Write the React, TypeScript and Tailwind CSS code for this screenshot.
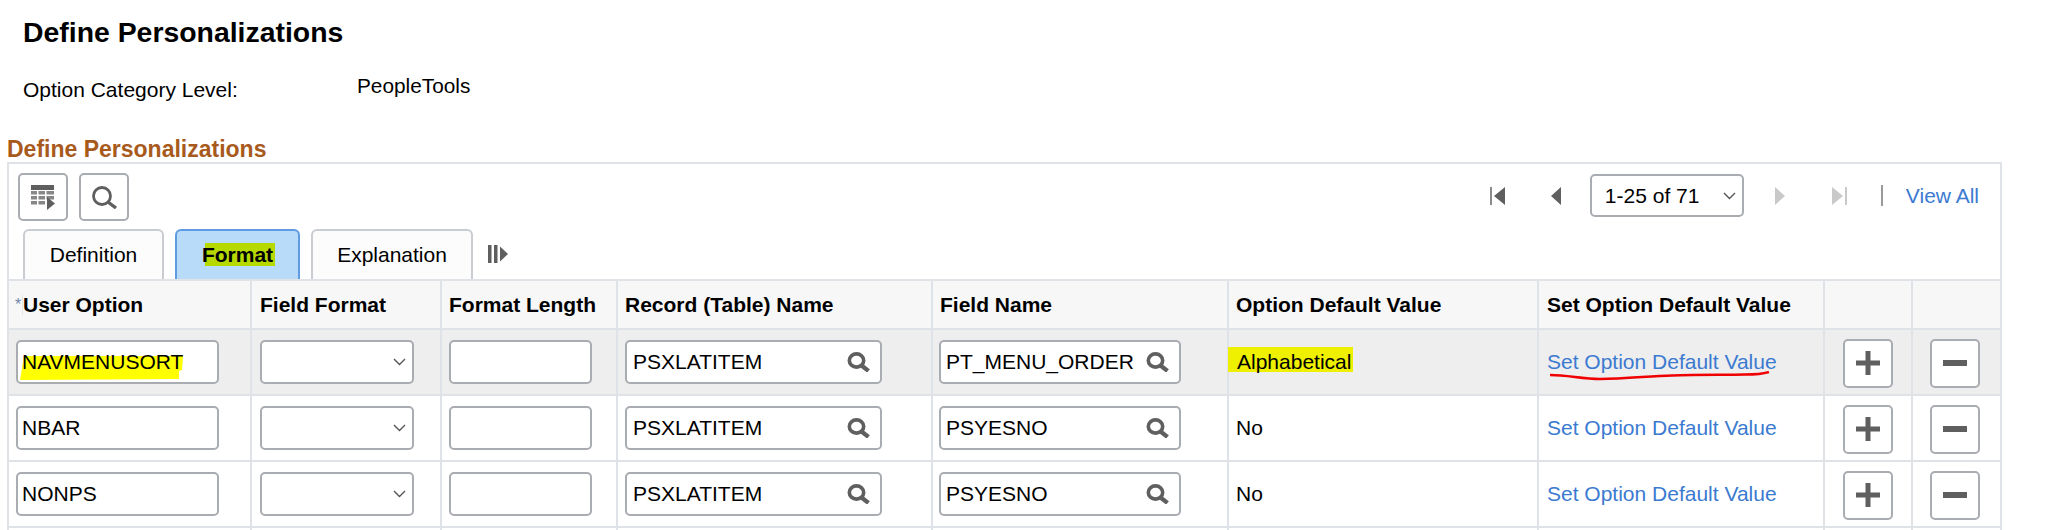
import type { ReactNode } from 'react';

const rows = [
  { option: 'NAVMENUSORT', record: 'PSXLATITEM', field: 'PT_MENU_ORDER', value: 'Alphabetical', marked: true },
  { option: 'NBAR', record: 'PSXLATITEM', field: 'PSYESNO', value: 'No', marked: false },
  { option: 'NONPS', record: 'PSXLATITEM', field: 'PSYESNO', value: 'No', marked: false },
];

const columns = 'grid grid-cols-[243px_190px_176px_315px_296px_310px_286px_88px_87px]';
const cellBorder = 'border-r-2 border-[#dfe3e8] last:border-r-0';

const Chevron = () => (
  <svg width="13" height="8" viewBox="0 0 13 8" fill="none" stroke="#555" strokeWidth="1.4">
    <path d="M1 1l5.5 5.5L12 1" />
  </svg>
);

const LookupIcon = () => (
  <svg width="23" height="20" viewBox="0 0 23 20" fill="none" stroke="#5f5f5f">
    <ellipse cx="9.5" cy="8.5" rx="7.2" ry="6.6" strokeWidth="3.6" />
    <path d="M14.5 13.5l7 5.5" strokeWidth="4.2" />
  </svg>
);

const FieldBox = ({ className, children }: { className: string; children?: ReactNode }) => (
  <div className={`relative flex h-[44px] items-center rounded-[5px] border-2 border-[#a9acb1] bg-white ${className}`}>
    {children}
  </div>
);

const IconButton = ({ children, className = '' }: { children: ReactNode; className?: string }) => (
  <button className={`flex items-center justify-center rounded-[5px] border-2 border-[#a9acb1] bg-white ${className}`}>
    {children}
  </button>
);

const Pager = () => (
  <div className="mt-px flex items-center pr-[21px]">
    <svg width="15" height="18" viewBox="0 0 15 18" fill="#5f5f5f">
      <rect width="2" height="18" fill="#8a8a8a" />
      <path d="M15 0v18L4 9z" />
    </svg>
    <svg className="ml-[46px]" width="10" height="18" viewBox="0 0 10 18" fill="#5f5f5f">
      <path d="M10 0v18L0 9z" />
    </svg>
    <div className="ml-[29px] flex h-[43px] w-[154px] items-center justify-between rounded-[5px] border-2 border-[#a9acb1] bg-white pl-[13px] pr-[6px]">
      <span>1-25 of 71</span>
      <Chevron />
    </div>
    <svg className="ml-[31px]" width="10" height="18" viewBox="0 0 10 18" fill="#c9c9c9">
      <path d="M0 0v18L10 9z" />
    </svg>
    <svg className="ml-[47px]" width="15" height="18" viewBox="0 0 15 18" fill="#c9c9c9">
      <path d="M0 0v18L11 9z" />
      <rect x="13" width="2" height="18" />
    </svg>
    <div className="ml-[34px] h-[21px] w-[2px] bg-[#9a9a9a]" />
    <a className="ml-[23px] text-[#3b7ad1]">View All</a>
  </div>
);

const Toolbar = () => (
  <div className="flex items-start justify-between pl-[9px] pt-[9px]">
    <div className="flex gap-[11px]">
      <IconButton className="h-[48px] w-[50px]">
        <svg width="24" height="25" viewBox="0 0 24 25" fill="#5f5f5f">
          <rect width="23" height="5" />
          <path d="M0 6h6v3.5H0zM7.5 6H14v3.5H7.5zM15.5 6H23v3.5h-7.5zM0 11h6v3.5H0zM7.5 11H14v3.5H7.5zM15.5 11H23v3.5h-7.5zM0 16h6v3.5H0zM7.5 16H14v3.5H7.5z" opacity="0.75" />
          <path d="M16 12l8 6.5L16 25z" />
        </svg>
      </IconButton>
      <IconButton className="h-[48px] w-[50px]">
        <svg width="25" height="23" viewBox="0 0 25 23" fill="none" stroke="#5f5f5f">
          <circle cx="10" cy="10" r="8.5" strokeWidth="2.8" />
          <path d="M16 16l8 6" strokeWidth="3.4" />
        </svg>
      </IconButton>
    </div>
    <Pager />
  </div>
);

const Tabs = () => (
  <div className="mt-[8px] flex h-[50px] items-stretch gap-[11px] pl-[14px]">
    <div className="flex w-[141px] items-center justify-center rounded-t-[6px] border-2 border-b-0 border-[#c9ccd1] bg-[#fcfcfc]">
      Definition
    </div>
    <div className="flex w-[125px] items-center justify-center rounded-t-[6px] border-2 border-b-0 border-[#5f9be0] bg-[#b8dbfa] font-bold">
      <span className="relative">
        <span className="absolute left-[3px] top-[4px] h-[23px] w-[70px] bg-[#b6da00]" />
        <span className="relative">Format</span>
      </span>
    </div>
    <div className="flex w-[162px] items-center justify-center rounded-t-[6px] border-2 border-b-0 border-[#c9ccd1] bg-[#fcfcfc]">
      Explanation
    </div>
    <div className="ml-[4px] flex items-center">
      <svg width="20" height="18" viewBox="0 0 20 18" fill="#5f5f5f">
        <rect width="3.5" height="18" />
        <rect x="6" width="3.5" height="18" />
        <path d="M12 1.5v15L20 9z" />
      </svg>
    </div>
  </div>
);

const Header = () => {
  const titles = ['Field Format', 'Format Length', 'Record (Table) Name', 'Field Name', 'Option Default Value', 'Set Option Default Value', '', ''];
  const padding = ['pl-[8px]', 'pl-[7px]', 'pl-[7px]', 'pl-[7px]', 'pl-[7px]', 'pl-[8px]', '', ''];
  return (
    <div className={`${columns} h-[51px] border-y-2 border-[#dfe3e8] bg-[#f7f7f7] font-bold`}>
      <div className={`${cellBorder} flex items-center pl-[6px]`}>
        <span className="flex h-[20px] w-[8px] items-center border-r border-[#e6e6e6] text-[16px] font-normal leading-none text-[#6f86a8]">*</span>
        <span>User Option</span>
      </div>
      {titles.map((title, i) => (
        <div key={i} className={`${cellBorder} flex items-center ${padding[i]}`}>
          {title}
        </div>
      ))}
    </div>
  );
};

const Row = ({ row }: { row: (typeof rows)[number] }) => (
  <div className={`${columns} h-[66px] border-b-2 border-[#dfe3e8] ${row.marked ? 'bg-[#eeeeee]' : 'bg-white'}`}>
    <div className={`${cellBorder} flex items-center pl-[7px]`}>
      <FieldBox className="w-[203px] pl-[4px]">
        {row.marked && (
          <svg className="absolute left-[1px] top-[13px]" width="170" height="26" viewBox="0 0 170 26" fill="#ffff00">
            <path d="M5 1L164 1L163 15L160 16L160 24L1 25Z" />
          </svg>
        )}
        <span className="relative">{row.option}</span>
      </FieldBox>
    </div>
    <div className={`${cellBorder} flex items-center pl-[8px]`}>
      <FieldBox className="w-[154px] justify-end pr-[6px]">
        <Chevron />
      </FieldBox>
    </div>
    <div className={`${cellBorder} flex items-center pl-[7px]`}>
      <FieldBox className="w-[143px]" />
    </div>
    <div className={`${cellBorder} flex items-center pl-[7px]`}>
      <FieldBox className="w-[257px] justify-between pl-[6px] pr-[10px]">
        <span>{row.record}</span>
        <LookupIcon />
      </FieldBox>
    </div>
    <div className={`${cellBorder} flex items-center pl-[6px]`}>
      <FieldBox className="w-[242px] justify-between pl-[5px] pr-[10px]">
        <span>{row.field}</span>
        <LookupIcon />
      </FieldBox>
    </div>
    <div className={`${cellBorder} flex items-center pl-[7px]`}>
      {row.marked ? (
        <span className="-ml-[8px] mb-[5px] h-[25px] w-[125px] bg-[#eef000] pl-[9px] leading-[30px]">{row.value}</span>
      ) : (
        <span>{row.value}</span>
      )}
    </div>
    <div className={`${cellBorder} flex items-center pl-[8px]`}>
      <a className="relative text-[#3b7ad1]">
        Set Option Default Value
        {row.marked && (
          <svg className="absolute left-[3px] top-[25px]" width="220" height="10" viewBox="0 0 220 10" fill="none" stroke="#f00000" strokeWidth="2.5">
            <path d="M0 4C18 4 32 8 50 8C75 8 100 5 122 4.5C150 3.5 175 4 195 3.5C205 3.5 214 2.5 219 1" />
          </svg>
        )}
      </a>
    </div>
    <div className={`${cellBorder} flex items-center pl-[18px]`}>
      <IconButton className="mt-[2px] h-[49px] w-[50px]">
        <svg width="24" height="24" viewBox="0 0 24 24" fill="#5f5f5f">
          <path d="M9.5 0h5v9.5H24v5h-9.5V24h-5v-9.5H0v-5h9.5z" />
        </svg>
      </IconButton>
    </div>
    <div className={`${cellBorder} flex items-center pl-[17px]`}>
      <IconButton className="mt-[2px] h-[49px] w-[50px]">
        <svg width="24" height="6" viewBox="0 0 24 6" fill="#5f5f5f">
          <rect width="24" height="6" />
        </svg>
      </IconButton>
    </div>
  </div>
);

export default function App() {
  return (
    <div className="h-[530px] overflow-hidden bg-white font-['Liberation_Sans',Arial,sans-serif] text-[21px] text-black">
      <h1 className="pl-[23px] pt-[16px] text-[28.4px] font-bold leading-[32px]">Define Personalizations</h1>
      <div className="mt-[26px] flex items-start pl-[23px]">
        <div className="mt-[4px] w-[334px] leading-[24px]">Option Category Level:</div>
        <div className="text-[20.8px] leading-[24px]">PeopleTools</div>
      </div>
      <h2 className="mt-[34px] pl-[7px] text-[23px] font-bold leading-[26px] text-[#a85a1c]">Define Personalizations</h2>
      <div className="ml-[7px] w-[1995px] border-2 border-[#dfe3e8]">
        <Toolbar />
        <Tabs />
        <Header />
        {rows.map((row) => (
          <Row key={row.option} row={row} />
        ))}
        <div className={`${columns} h-[10px]`}>
          {Array.from({ length: 9 }, (_, i) => (
            <div key={i} className={cellBorder} />
          ))}
        </div>
      </div>
    </div>
  );
}
